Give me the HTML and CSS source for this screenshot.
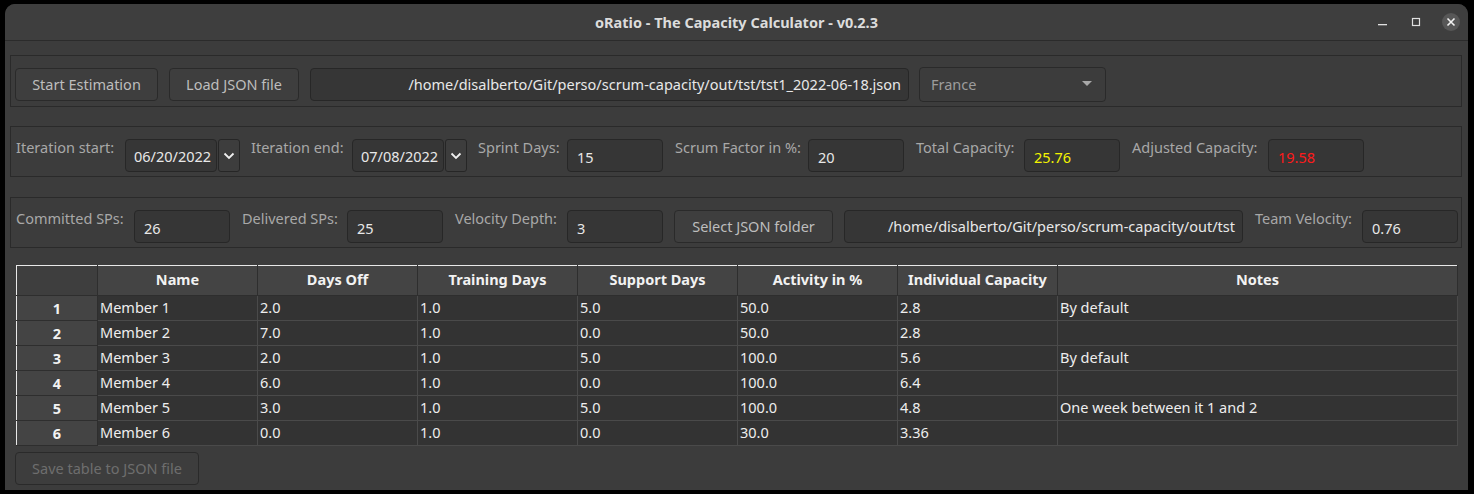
FILE: index.html
```html
<!DOCTYPE html>
<html>
<head>
<meta charset="utf-8">
<link rel="stylesheet" href="styles.css">
</head>
<body>
<div class="window">
  <div class="titlebar">
    <div></div>
    <div class="title">oRatio - The Capacity Calculator - v0.2.3</div>
    <div class="controls">
      <svg class="ctl" width="14" height="14" viewBox="0 0 14 14"><rect x="2" y="9" width="9" height="1.3" fill="#e0e0e0"/></svg>
      <svg class="ctl" width="14" height="14" viewBox="0 0 14 14"><rect x="3.5" y="3.5" width="7" height="7" fill="none" stroke="#e0e0e0" stroke-width="1.2"/></svg>
      <div class="close"><svg width="18" height="18" viewBox="0 0 18 18"><path d="M5.5 5.5 L12.5 12.5 M12.5 5.5 L5.5 12.5" stroke="#f2f2f2" stroke-width="1.6" fill="none"/></svg></div>
    </div>
  </div>
  <div class="content">
    <div class="frame f1">
      <button class="btn b-start">Start Estimation</button>
      <button class="btn b-load">Load JSON file</button>
      <div class="field path p1">/home/disalberto/Git/perso/scrum-capacity/out/tst/tst1_2022-06-18.json</div>
      <div class="combo"><span>France</span><svg width="10" height="6" viewBox="0 0 10 6"><path d="M0 0 L10 0 L5 5 Z" fill="#a8a8a8"/></svg></div>
    </div>
    <div class="frame f2">
      <label class="lbl l-is">Iteration start:</label>
      <div class="field date">06/20/2022</div>
      <div class="dd"><svg width="12" height="8" viewBox="0 0 12 8"><path d="M1.5 1.5 L6 6 L10.5 1.5" stroke="#f0f0f0" stroke-width="1.8" fill="none"/></svg></div>
      <label class="lbl l-ie">Iteration end:</label>
      <div class="field date">07/08/2022</div>
      <div class="dd"><svg width="12" height="8" viewBox="0 0 12 8"><path d="M1.5 1.5 L6 6 L10.5 1.5" stroke="#f0f0f0" stroke-width="1.8" fill="none"/></svg></div>
      <label class="lbl l-sd">Sprint Days:</label>
      <div class="field num">15</div>
      <label class="lbl l-sf">Scrum Factor in %:</label>
      <div class="field num">20</div>
      <label class="lbl l-tc">Total Capacity:</label>
      <div class="field num yellow">25.76</div>
      <label class="lbl l-ac">Adjusted Capacity:</label>
      <div class="field num red">19.58</div>
    </div>
    <div class="frame f3">
      <label class="lbl l-cs">Committed SPs:</label>
      <div class="field num">26</div>
      <label class="lbl l-ds">Delivered SPs:</label>
      <div class="field num">25</div>
      <label class="lbl l-vd">Velocity Depth:</label>
      <div class="field num tight">3</div>
      <button class="btn b-sel">Select JSON folder</button>
      <div class="field path p2">/home/disalberto/Git/perso/scrum-capacity/out/tst</div>
      <label class="lbl l-tv">Team Velocity:</label>
      <div class="field num">0.76</div>
    </div>
    <table class="grid">
      <thead>
        <tr>
          <th class="corner"></th>
          <th>Name</th><th>Days Off</th><th>Training Days</th><th>Support Days</th><th>Activity in %</th><th>Individual Capacity</th><th class="notes">Notes</th>
        </tr>
      </thead>
      <tbody>
        <tr><th class="rh">1</th><td>Member 1</td><td>2.0</td><td>1.0</td><td>5.0</td><td>50.0</td><td>2.8</td><td>By default</td></tr>
        <tr><th class="rh">2</th><td>Member 2</td><td>7.0</td><td>1.0</td><td>0.0</td><td>50.0</td><td>2.8</td><td></td></tr>
        <tr><th class="rh">3</th><td>Member 3</td><td>2.0</td><td>1.0</td><td>5.0</td><td>100.0</td><td>5.6</td><td>By default</td></tr>
        <tr><th class="rh">4</th><td>Member 4</td><td>6.0</td><td>1.0</td><td>0.0</td><td>100.0</td><td>6.4</td><td></td></tr>
        <tr><th class="rh">5</th><td>Member 5</td><td>3.0</td><td>1.0</td><td>5.0</td><td>100.0</td><td>4.8</td><td>One week between it 1 and 2</td></tr>
        <tr><th class="rh">6</th><td>Member 6</td><td>0.0</td><td>1.0</td><td>0.0</td><td>30.0</td><td>3.36</td><td></td></tr>
      </tbody>
    </table>
    <button class="btn b-save" disabled>Save table to JSON file</button>
  </div>
</div>
</body>
</html>
```
FILE: styles.css
```css
html, body {
  margin: 0;
  padding: 0;
  background: #000;
  width: 1474px;
  height: 494px;
  overflow: hidden;
}
body {
  font-family: "Noto Sans", "Open Sans", sans-serif;
  font-size: 14.5px;
  color: #e6e6e6;
}
.window {
  margin: 4px 0 0 5px;
  width: 1463px;
  height: 486px;
  background: #3c3c3c;
  border-radius: 10px 10px 0 0;
  box-sizing: border-box;
  overflow: hidden;
}
.titlebar {
  height: 36px;
  border-bottom: 1px solid #2b2b2b;
  background: #3e3e3e;
  display: grid;
  grid-template-columns: 1fr auto 1fr;
  align-items: center;
}
.title {
  font-weight: bold;
  color: #dcdcdc;
  font-size: 14.5px;
}
.controls {
  justify-self: end;
  display: flex;
  align-items: center;
  gap: 19px;
  padding-right: 8px;
}
.close {
  width: 18px;
  height: 18px;
  border-radius: 50%;
  background: #575757;
  display: flex;
}
.content {
  padding: 14px 6px 0 5px;
  display: flex;
  flex-direction: column;
  align-items: flex-start;
}
.frame {
  width: 1452px;
  box-sizing: border-box;
  border: 1px solid #2a2a2a;
  display: flex;
  align-items: flex-start;
}
.frame > * { flex-shrink: 0; }
.f1 {
  height: 52px;
  padding: 12px 0 0 4px;
}
.f2 {
  margin-top: 19px;
  height: 51px;
  padding: 12px 0 0 5px;
}
.f3 {
  margin-top: 20px;
  height: 51px;
  padding: 12px 0 0 5px;
}
.btn {
  font-family: inherit;
  font-size: 14.5px;
  height: 33px;
  background: #3e3e3e;
  border: 1px solid #2a2a2a;
  border-radius: 4px;
  color: #bdbdbd;
  padding: 0 0 2px 0;
  box-sizing: border-box;
}
.b-start { width: 143px; margin-right: 11px; }
.b-load { width: 130px; margin-right: 11px; }
.b-sel { width: 159px; margin-right: 11px; }
.field {
  height: 33px;
  box-sizing: border-box;
  background: #363636;
  border: 1px solid #272727;
  border-radius: 4px;
  color: #e8e8e8;
  display: flex;
  align-items: center;
  white-space: nowrap;
  overflow: hidden;
  padding-top: 1px;
}
.path {
  justify-content: flex-end;
  padding-right: 7px;
}
.p1 { width: 599px; margin-right: 10px; padding-top: 0; padding-bottom: 2px; }
.p2 { width: 399px; margin-right: 12px; padding-top: 0; padding-bottom: 2px; }
.date {
  width: 92px;
  padding-left: 8px;
  margin-right: 1px;
}
.num {
  width: 96px;
  padding-left: 9px;
  margin-right: 12px;
  padding-top: 3px;
}
.num.tight { margin-right: 11px; }
.yellow { color: #f4f400; }
.red { color: #ff1a1a; }
.dd {
  width: 22px;
  height: 33px;
  box-sizing: border-box;
  background: #3d3d3d;
  border: 1px solid #262626;
  border-radius: 3px;
  display: flex;
  align-items: center;
  justify-content: center;
  margin-right: 11px;
}
.combo {
  width: 187px;
  height: 35px;
  margin-top: -1px;
  box-sizing: border-box;
  background: #3c3c3c;
  border: 1px solid #2a2a2a;
  border-radius: 4px;
  display: flex;
  align-items: center;
  justify-content: space-between;
  padding: 0 13px 2px 11px;
  color: #9c9c9c;
}
.lbl {
  color: #a8a8a8;
  line-height: 17px;
  padding-top: 0;
  white-space: nowrap;
}
.l-is { width: 109px; }
.l-ie { width: 101px; }
.l-sd { width: 89px; }
.l-sf { width: 133px; }
.l-tc { width: 108px; }
.l-ac { width: 136px; }
.l-cs { width: 118px; }
.l-ds { width: 105px; }
.l-vd { width: 112px; }
.l-tv { width: 107px; }

.grid {
  margin: 17px 0 0 6px;
  border-collapse: collapse;
  table-layout: fixed;
  width: 1441px;
  font-size: 14.5px;
}
.grid th {
  font-weight: bold;
  color: #f2f2f2;
  background: #444;
  height: 30px;
  padding: 0 0 3px 0;
  width: 160px;
  border-top: 1px solid #e8e8e8;
  border-left: 1px solid #e8e8e8;
  border-right: 1px solid #2e2e2e;
  border-bottom: 1px solid #2e2e2e;
  box-sizing: border-box;
}
.grid th.corner {
  width: 81px;
  background: #3e3e3e;
}
.grid th.notes { width: 400px; }
.grid th.rh {
  height: 25px;
  background: #444;
  border-right: 1px solid #2e2e2e;
  padding: 0;
}
.grid td {
  background: #333;
  color: #eeeeee;
  height: 25px;
  padding: 0 2px 3px 2px;
  border-right: 1px solid #4a4a4a;
  border-bottom: 1px solid #4a4a4a;
  box-sizing: border-box;
  white-space: nowrap;
  overflow: hidden;
  vertical-align: middle;
}
.b-save {
  margin: 6px 0 0 5px;
  width: 184px;
  color: #6e6e6e;
  background: #3d3d3d;
}
```
